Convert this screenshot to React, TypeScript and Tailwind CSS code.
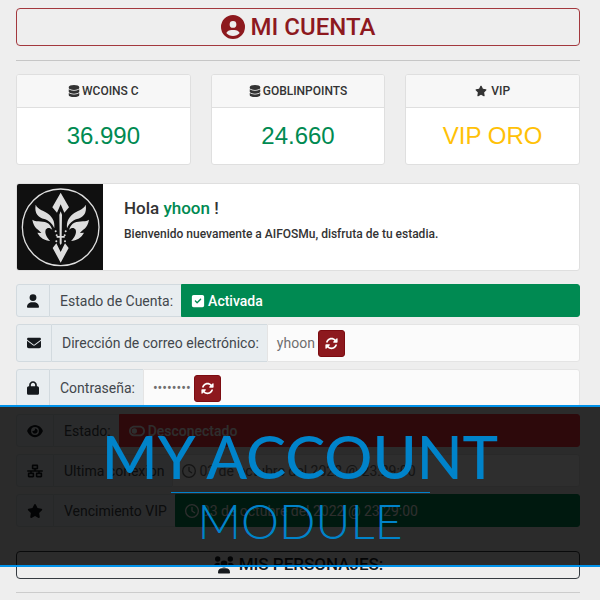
import type { ReactNode } from "react";
import {
  FaCircleUser,
  FaDatabase,
  FaEnvelope,
  FaEye,
  FaLock,
  FaNetworkWired,
  FaRegClock,
  FaRotate,
  FaSquareCheck,
  FaStar,
  FaToggleOff,
  FaUser,
} from "react-icons/fa6";

function StatCard({ icon, title, value, tone }: { icon: ReactNode; title: string; value: string; tone: string }) {
  return (
    <section className="overflow-hidden rounded-[3px] border border-[#dfdfdf] bg-white text-center">
      <h2 className="flex h-[33px] items-center justify-center gap-0.5 border-b border-[#dfdfdf] bg-[#f7f7f7] text-xs font-medium text-[#333]">
        {icon}
        {title}
      </h2>
      <p className={`flex h-14 items-center justify-center font-['Liberation_Sans',sans-serif] text-2xl ${tone}`}>{value}</p>
    </section>
  );
}

function Row({
  icon,
  label,
  children,
  tone = "bg-[#fbfbfb] text-[#6f6f6f] border-[#e4e4e4]",
  tall = false,
}: {
  icon: ReactNode;
  label: string;
  children: ReactNode;
  tone?: string;
  tall?: boolean;
}) {
  return (
    <div className={`flex text-sm ${tall ? "h-[38px]" : "h-[33px]"}`}>
      <span className="flex items-center rounded-l-[3px] border border-[#d2dadf] bg-[#e8edf0] px-[10px] text-[#15191d]">{icon}</span>
      <span className="flex items-center border-y border-[#d2dadf] bg-[#e8edf0] pr-2 pl-[10px] text-[#42474c]">{label}</span>
      <div className={`flex flex-1 items-center gap-[3px] rounded-r-[3px] border px-[9px] ${tone}`}>{children}</div>
    </div>
  );
}

function RefreshButton({ label }: { label: string }) {
  return (
    <button
      type="button"
      aria-label={label}
      className="flex h-[27px] w-[27px] items-center justify-center rounded-[3px] border border-[#7c0c11] bg-[#8d191e] text-[13px] text-white"
    >
      <FaRotate />
    </button>
  );
}

function Emblem() {
  const wing = (
    <>
      <path d="M71 74C79 91 97 91 110 103C122 113 129 125 127 145C120 129 110 121 97 117C80 113 66 101 71 74Z" />
      <path d="M61 119C75 128 97 120 110 131C116 137 119 143 121 150C113 142 106 143 101 149C97 160 106 174 115 183C98 181 84 174 76 158L88 159C83 149 65 147 61 119Z" />
      <circle cx="131" cy="154" r="3" />
      <circle cx="134" cy="166" r="3" />
      <circle cx="133" cy="184" r="3" />
    </>
  );
  return (
    <svg viewBox="15 12 258 258" className="h-[86px] w-[86px] shrink-0 bg-[#101010]" aria-hidden="true">
      <circle cx="146" cy="142" r="115" fill="none" stroke="#dedede" strokeWidth="4" />
      <g fill="#dedede">
        {wing}
        <g transform="translate(292 0) scale(-1 1)">{wing}</g>
        <path d="M146 38L171 82L157 98L146 73L135 98L121 82Z" />
        <path d="M146 248L122 204L133 190L146 216L159 190L170 204Z" />
        <path d="M146 94L150 104L149 168H158V173H149V190L146 195L143 190V173H134V168H143L142 104Z" />
      </g>
    </svg>
  );
}

function PeopleIcon() {
  return (
    <svg viewBox="0 0 22 18" className="h-[18px] w-[22px]" fill="currentColor" aria-hidden="true">
      <circle cx="4.7" cy="3" r="2.7" />
      <circle cx="17.3" cy="3" r="2.7" />
      <circle cx="11" cy="8" r="3.4" />
      <path d="M1 10.5C1 8 2.5 6.8 4.7 6.8C5.6 6.8 6.3 7 6.8 7.3C6.5 8.8 6.8 9.8 7.4 10.8H1.5Z" />
      <path d="M21 10.5C21 8 19.5 6.8 17.3 6.8C16.4 6.8 15.7 7 15.2 7.3C15.5 8.8 15.2 9.8 14.6 10.8H20.5Z" />
      <path d="M5 16.5C5 13.7 6.8 12.3 9 12.3H13C15.2 12.3 17 13.7 17 16.5C17 17.2 16.6 17.5 16 17.5H6C5.4 17.5 5 17.2 5 16.5Z" />
    </svg>
  );
}

export default function App() {
  return (
    <div className="relative overflow-hidden bg-[#eee] font-[Roboto,sans-serif]">
      <main className="pt-2 pr-5 pb-2 pl-4">
        <h1 className="flex h-[38px] items-center justify-center gap-[6px] rounded border border-[#a3383d] text-2xl font-medium text-[#8d191e]">
          <FaCircleUser />
          MI CUENTA
        </h1>
        <hr className="mt-[14px] mb-[13px] border-[#c6c6c6]" />

        <div className="grid grid-cols-3 gap-5">
          <StatCard icon={<FaDatabase />} title="WCOINS C" value="36.990" tone="text-[#008a52]" />
          <StatCard icon={<FaDatabase />} title="GOBLINPOINTS" value="24.660" tone="text-[#008a52]" />
          <StatCard icon={<FaStar className="mr-0.5" />} title="VIP" value="VIP ORO" tone="text-[#ffc107]" />
        </div>

        <section className="mt-[18px] flex overflow-hidden rounded-[3px] border border-[#dfdfdf] bg-white">
          <Emblem />
          <div className="px-[21px] pt-3 font-medium text-[#333]">
            <h2 className="text-[17px] leading-6">
              Hola <span className="text-[#008a52]">yhoon</span> !
            </h2>
            <p className="mt-[6px] text-xs">Bienvenido nuevamente a AIFOSMu, disfruta de tu estadia.</p>
          </div>
        </section>

        <div className="mt-[13px] flex flex-col gap-[7px]">
          <Row icon={<FaUser className="w-3" />} label="Estado de Cuenta:" tone="border-[#008a52] bg-[#008a52] font-medium text-white">
            <FaSquareCheck />
            Activada
          </Row>
          <Row icon={<FaEnvelope />} label="Dirección de correo electrónico:" tall>
            yhoon
            <RefreshButton label="Cambiar correo electrónico" />
          </Row>
          <Row icon={<FaLock className="w-3" />} label="Contraseña:" tall>
            ••••••••
            <RefreshButton label="Cambiar contraseña" />
          </Row>
          <Row icon={<FaEye className="w-4" />} label="Estado:" tone="border-[#fa323c] bg-[#fa323c] font-medium text-white">
            <FaToggleOff className="text-base" />
            Desconectado
          </Row>
          <Row icon={<FaNetworkWired className="w-4" />} label="Ultima conexion">
            <FaRegClock />
            03 de octubre del 2022 @ 23:29:00
          </Row>
          <Row icon={<FaStar className="w-4" />} label="Vencimiento VIP" tone="border-[#008a52] bg-[#008a52] text-white">
            <FaRegClock />
            03 de octubre del 2022 @ 23:29:00
          </Row>
        </div>

        <h2 className="mt-6 flex h-7 items-center justify-center gap-1 rounded border border-[#343a40] text-[17px] font-medium text-[#15191d]">
          <PeopleIcon />
          MIS PERSONAJES:
        </h2>
        <hr className="mt-[13px] border-[#ccc]" />
      </main>

      {/* Banner laid over the lower part of the account panel */}
      <div className="absolute inset-x-0 top-[405px] flex h-[162px] flex-col items-center border-y-2 border-[#0092ea] bg-black/82 text-[#0083ca]">
        <p className="mt-[14px] font-[Lato,sans-serif] text-6xl leading-[71px] font-medium whitespace-nowrap">MY ACCOUNT</p>
        <div className="h-px w-[259px] shrink-0 bg-[#0083ca]" />
        <p className="font-[Lato,sans-serif] text-5xl leading-[56px] font-light">MODULE</p>
      </div>
    </div>
  );
}
